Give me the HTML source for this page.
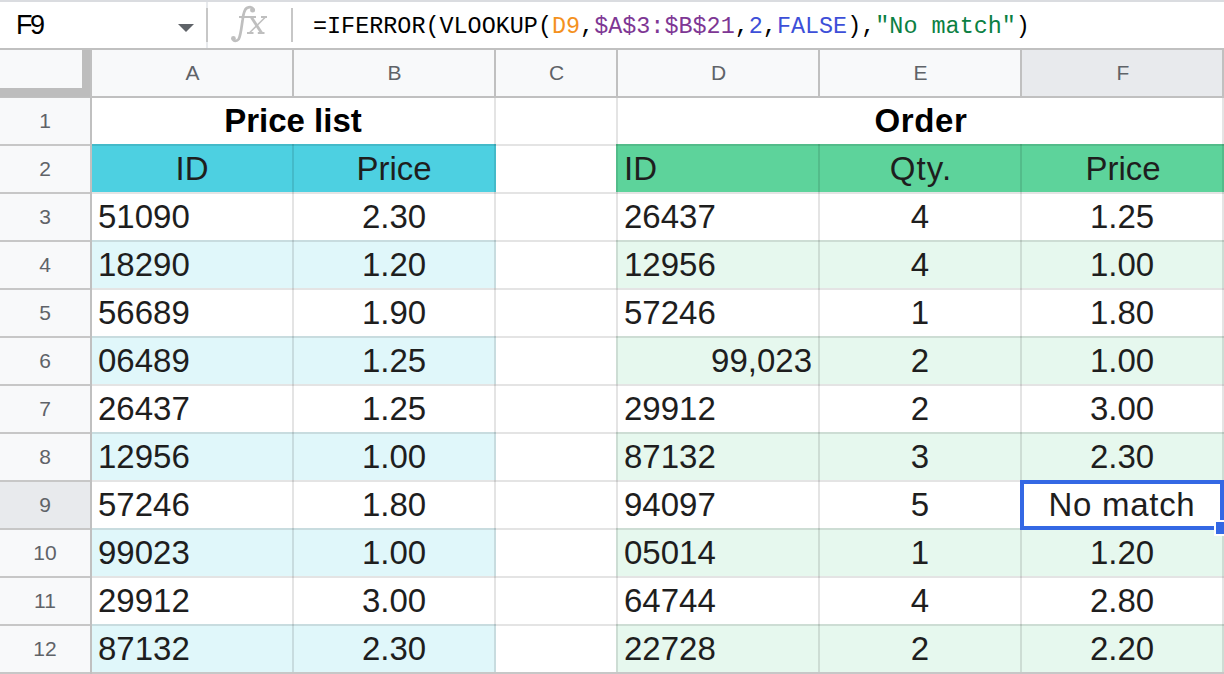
<!DOCTYPE html><html><head><meta charset="utf-8"><style>
*{margin:0;padding:0}
html,body{width:1224px;height:674px;overflow:hidden;background:#fff}
body{position:relative;font-family:"Liberation Sans",sans-serif}
body>div{position:absolute}
.rh,.ch{color:#5f6368;font-size:21px;text-align:center}
.c{height:46px;line-height:46px;font-size:33px;color:#1e1e1e;white-space:nowrap;overflow:hidden}
.b{font-weight:bold;color:#000}
.nb{left:16px;top:0;height:48px;line-height:50px;font-size:27px;letter-spacing:-2.4px;color:#000}
.fx{left:229px;top:0;height:48px;line-height:46px;font-family:"Liberation Serif",serif;font-style:italic;font-size:38px;color:#bdbdbd}
.fm{left:313px;top:2px;height:48px;line-height:49px;font-family:"Liberation Mono",monospace;font-size:23.43px;transform:scaleY(1.06);transform-origin:0 24px;color:#000;white-space:pre}
</style></head><body><div style="left:91px;top:144px;width:405px;height:48px;background:#4dd0e1;"></div>
<div style="left:616px;top:144px;width:608px;height:48px;background:#5dd39b;"></div>
<div style="left:91px;top:240px;width:405px;height:48px;background:#e0f7fa;"></div>
<div style="left:616px;top:240px;width:608px;height:48px;background:#e6f8ee;"></div>
<div style="left:91px;top:336px;width:405px;height:48px;background:#e0f7fa;"></div>
<div style="left:616px;top:336px;width:608px;height:48px;background:#e6f8ee;"></div>
<div style="left:91px;top:432px;width:405px;height:48px;background:#e0f7fa;"></div>
<div style="left:616px;top:432px;width:608px;height:48px;background:#e6f8ee;"></div>
<div style="left:91px;top:528px;width:405px;height:48px;background:#e0f7fa;"></div>
<div style="left:616px;top:528px;width:608px;height:48px;background:#e6f8ee;"></div>
<div style="left:91px;top:624px;width:405px;height:48px;background:#e0f7fa;"></div>
<div style="left:616px;top:624px;width:608px;height:48px;background:#e6f8ee;"></div>
<div style="left:91px;top:144px;width:1133px;height:2px;background:rgba(0,0,0,0.105);"></div>
<div style="left:91px;top:192px;width:1133px;height:2px;background:rgba(0,0,0,0.105);"></div>
<div style="left:91px;top:240px;width:1133px;height:2px;background:rgba(0,0,0,0.105);"></div>
<div style="left:91px;top:288px;width:1133px;height:2px;background:rgba(0,0,0,0.105);"></div>
<div style="left:91px;top:336px;width:1133px;height:2px;background:rgba(0,0,0,0.105);"></div>
<div style="left:91px;top:384px;width:1133px;height:2px;background:rgba(0,0,0,0.105);"></div>
<div style="left:91px;top:432px;width:1133px;height:2px;background:rgba(0,0,0,0.105);"></div>
<div style="left:91px;top:480px;width:1133px;height:2px;background:rgba(0,0,0,0.105);"></div>
<div style="left:91px;top:528px;width:1133px;height:2px;background:rgba(0,0,0,0.105);"></div>
<div style="left:91px;top:576px;width:1133px;height:2px;background:rgba(0,0,0,0.105);"></div>
<div style="left:91px;top:624px;width:1133px;height:2px;background:rgba(0,0,0,0.105);"></div>
<div style="left:292px;top:97px;width:2px;height:577px;background:rgba(0,0,0,0.105);"></div>
<div style="left:494px;top:97px;width:2px;height:577px;background:rgba(0,0,0,0.105);"></div>
<div style="left:616px;top:97px;width:2px;height:577px;background:rgba(0,0,0,0.105);"></div>
<div style="left:818px;top:97px;width:2px;height:577px;background:rgba(0,0,0,0.105);"></div>
<div style="left:1020px;top:97px;width:2px;height:577px;background:rgba(0,0,0,0.105);"></div>
<div style="left:1222px;top:97px;width:2px;height:577px;background:rgba(0,0,0,0.105);"></div>
<div style="left:292px;top:97px;width:2px;height:47px;background:#ffffff;"></div>
<div style="left:818px;top:97px;width:2px;height:47px;background:#ffffff;"></div>
<div style="left:1020px;top:97px;width:2px;height:47px;background:#ffffff;"></div>
<div style="left:0px;top:97px;width:90px;height:577px;background:#f8f9fa;"></div>
<div style="left:0px;top:482px;width:90px;height:46px;background:#e8eaed;"></div>
<div style="left:0px;top:144px;width:90px;height:2px;background:#c7c7c7;"></div>
<div style="left:0px;top:192px;width:90px;height:2px;background:#c7c7c7;"></div>
<div style="left:0px;top:240px;width:90px;height:2px;background:#c7c7c7;"></div>
<div style="left:0px;top:288px;width:90px;height:2px;background:#c7c7c7;"></div>
<div style="left:0px;top:336px;width:90px;height:2px;background:#c7c7c7;"></div>
<div style="left:0px;top:384px;width:90px;height:2px;background:#c7c7c7;"></div>
<div style="left:0px;top:432px;width:90px;height:2px;background:#c7c7c7;"></div>
<div style="left:0px;top:480px;width:90px;height:2px;background:#c7c7c7;"></div>
<div style="left:0px;top:528px;width:90px;height:2px;background:#c7c7c7;"></div>
<div style="left:0px;top:576px;width:90px;height:2px;background:#c7c7c7;"></div>
<div style="left:0px;top:624px;width:90px;height:2px;background:#c7c7c7;"></div>
<div style="left:0px;top:672px;width:1224px;height:2px;background:#c7c7c7;"></div>
<div style="left:90px;top:49px;width:2px;height:625px;background:#c0c0c0;"></div>
<div class="rh" style="left:0;top:98px;width:90px;height:46px;line-height:46px;">1</div>
<div class="rh" style="left:0;top:146px;width:90px;height:46px;line-height:46px;">2</div>
<div class="rh" style="left:0;top:194px;width:90px;height:46px;line-height:46px;">3</div>
<div class="rh" style="left:0;top:242px;width:90px;height:46px;line-height:46px;">4</div>
<div class="rh" style="left:0;top:290px;width:90px;height:46px;line-height:46px;">5</div>
<div class="rh" style="left:0;top:338px;width:90px;height:46px;line-height:46px;">6</div>
<div class="rh" style="left:0;top:386px;width:90px;height:46px;line-height:46px;">7</div>
<div class="rh" style="left:0;top:434px;width:90px;height:46px;line-height:46px;">8</div>
<div class="rh" style="left:0;top:482px;width:90px;height:46px;line-height:46px;">9</div>
<div class="rh" style="left:0;top:530px;width:90px;height:46px;line-height:46px;">10</div>
<div class="rh" style="left:0;top:578px;width:90px;height:46px;line-height:46px;">11</div>
<div class="rh" style="left:0;top:626px;width:90px;height:46px;line-height:46px;">12</div>
<div style="left:0px;top:49px;width:1224px;height:47px;background:#f8f9fa;"></div>
<div style="left:1022px;top:49px;width:202px;height:47px;background:#e8eaed;"></div>
<div style="left:292px;top:49px;width:2px;height:48px;background:#c0c0c0;"></div>
<div style="left:494px;top:49px;width:2px;height:48px;background:#c0c0c0;"></div>
<div style="left:616px;top:49px;width:2px;height:48px;background:#c0c0c0;"></div>
<div style="left:818px;top:49px;width:2px;height:48px;background:#c0c0c0;"></div>
<div style="left:1020px;top:49px;width:2px;height:48px;background:#c0c0c0;"></div>
<div style="left:1222px;top:49px;width:2px;height:48px;background:#c0c0c0;"></div>
<div style="left:0px;top:96px;width:1224px;height:2px;background:#c0c0c0;"></div>
<div class="ch" style="left:92px;top:49px;width:201px;height:47px;line-height:47px;">A</div>
<div class="ch" style="left:294px;top:49px;width:201px;height:47px;line-height:47px;">B</div>
<div class="ch" style="left:496px;top:49px;width:121px;height:47px;line-height:47px;">C</div>
<div class="ch" style="left:618px;top:49px;width:201px;height:47px;line-height:47px;">D</div>
<div class="ch" style="left:820px;top:49px;width:201px;height:47px;line-height:47px;">E</div>
<div class="ch" style="left:1022px;top:49px;width:202px;height:47px;line-height:47px;">F</div>
<div style="left:82px;top:49px;width:10px;height:48px;background:#bdbdbd;"></div>
<div style="left:0px;top:88px;width:92px;height:9px;background:#bdbdbd;"></div>
<div style="left:90px;top:49px;width:2px;height:48px;background:#c0c0c0;"></div>
<div style="left:0px;top:0px;width:1224px;height:48px;background:#ffffff;"></div>
<div style="left:0px;top:0px;width:1224px;height:2px;background:#dadce0;"></div>
<div style="left:0px;top:48px;width:1224px;height:2px;background:#c0c0c0;"></div>
<div class="nb">F9</div>
<svg style="position:absolute;left:178px;top:24px" width="16" height="8"><path d="M0 0 L16 0 L8 8 Z" fill="#5f6368"/></svg>
<div style="left:206px;top:2px;width:2px;height:46px;background:#e8eaed;"></div>
<div style="left:206px;top:8px;width:2px;height:34px;background:#c7c7c7;"></div>
<svg style="position:absolute;left:0;top:0" width="300" height="48" viewBox="0 0 300 48"><g fill="none" stroke="#bfbfbf"><path d="M233.2 39 C233.5 41.5 237 41.5 238.8 39 C240.8 35 241.8 25 242.6 20 C243.3 14 244.3 9.5 246.8 8 C249.3 6.8 252 7 253.1 9" stroke-width="2.7"/><path d="M251.5 17.5 L261.5 32.8" stroke-width="2.9"/><path d="M265 17.5 L249.5 32.8" stroke-width="1.5"/></g><g fill="#bfbfbf"><circle cx="233.4" cy="38.4" r="2.4"/><circle cx="252.6" cy="9.9" r="2.5"/><rect x="239" y="16" width="17" height="2"/><rect x="261" y="16" width="6" height="2"/><rect x="247" y="32" width="6.5" height="2"/><rect x="257.8" y="32" width="6.7" height="2"/></g></svg>
<div style="left:291px;top:8px;width:2px;height:34px;background:#c7c7c7;"></div>
<div class="fm"><span>=IFERROR(VLOOKUP(</span><span style="color:#f4911e">D9</span><span>,</span><span style="color:#7e3794">$A$3:$B$21</span><span>,</span><span style="color:#3d4fd8">2</span><span>,</span><span style="color:#3d4fd8">FALSE</span><span>),</span><span style="color:#0b8043">"No match"</span><span>)</span></div>
<div class="c b" style="left:92px;top:98px;width:402px;text-align:center;box-sizing:border-box;">Price list</div>
<div class="c b" style="left:618px;top:98px;width:606px;text-align:center;box-sizing:border-box;"><span style="letter-spacing:0.6px">Order</span></div>
<div class="c" style="left:92px;top:146px;width:200px;text-align:center;box-sizing:border-box;">ID</div>
<div class="c" style="left:294px;top:146px;width:200px;text-align:center;box-sizing:border-box;">Price</div>
<div class="c" style="left:618px;top:146px;width:200px;text-align:left;padding:0 6px;box-sizing:border-box;">ID</div>
<div class="c" style="left:822px;top:146px;width:198px;text-align:center;box-sizing:border-box;"><span style="letter-spacing:1.1px">Qty.</span></div>
<div class="c" style="left:1022px;top:146px;width:202px;text-align:center;box-sizing:border-box;">Price</div>
<div class="c" style="left:92px;top:194px;width:200px;text-align:left;padding:0 6px;box-sizing:border-box;">51090</div>
<div class="c" style="left:294px;top:194px;width:200px;text-align:center;box-sizing:border-box;">2.30</div>
<div class="c" style="left:618px;top:194px;width:200px;text-align:left;padding:0 6px;box-sizing:border-box;">26437</div>
<div class="c" style="left:820px;top:194px;width:200px;text-align:center;box-sizing:border-box;">4</div>
<div class="c" style="left:1022px;top:194px;width:200px;text-align:center;box-sizing:border-box;">1.25</div>
<div class="c" style="left:92px;top:242px;width:200px;text-align:left;padding:0 6px;box-sizing:border-box;">18290</div>
<div class="c" style="left:294px;top:242px;width:200px;text-align:center;box-sizing:border-box;">1.20</div>
<div class="c" style="left:618px;top:242px;width:200px;text-align:left;padding:0 6px;box-sizing:border-box;">12956</div>
<div class="c" style="left:820px;top:242px;width:200px;text-align:center;box-sizing:border-box;">4</div>
<div class="c" style="left:1022px;top:242px;width:200px;text-align:center;box-sizing:border-box;">1.00</div>
<div class="c" style="left:92px;top:290px;width:200px;text-align:left;padding:0 6px;box-sizing:border-box;">56689</div>
<div class="c" style="left:294px;top:290px;width:200px;text-align:center;box-sizing:border-box;">1.90</div>
<div class="c" style="left:618px;top:290px;width:200px;text-align:left;padding:0 6px;box-sizing:border-box;">57246</div>
<div class="c" style="left:820px;top:290px;width:200px;text-align:center;box-sizing:border-box;">1</div>
<div class="c" style="left:1022px;top:290px;width:200px;text-align:center;box-sizing:border-box;">1.80</div>
<div class="c" style="left:92px;top:338px;width:200px;text-align:left;padding:0 6px;box-sizing:border-box;">06489</div>
<div class="c" style="left:294px;top:338px;width:200px;text-align:center;box-sizing:border-box;">1.25</div>
<div class="c" style="left:618px;top:338px;width:200px;text-align:right;padding:0 6px;box-sizing:border-box;">99,023</div>
<div class="c" style="left:820px;top:338px;width:200px;text-align:center;box-sizing:border-box;">2</div>
<div class="c" style="left:1022px;top:338px;width:200px;text-align:center;box-sizing:border-box;">1.00</div>
<div class="c" style="left:92px;top:386px;width:200px;text-align:left;padding:0 6px;box-sizing:border-box;">26437</div>
<div class="c" style="left:294px;top:386px;width:200px;text-align:center;box-sizing:border-box;">1.25</div>
<div class="c" style="left:618px;top:386px;width:200px;text-align:left;padding:0 6px;box-sizing:border-box;">29912</div>
<div class="c" style="left:820px;top:386px;width:200px;text-align:center;box-sizing:border-box;">2</div>
<div class="c" style="left:1022px;top:386px;width:200px;text-align:center;box-sizing:border-box;">3.00</div>
<div class="c" style="left:92px;top:434px;width:200px;text-align:left;padding:0 6px;box-sizing:border-box;">12956</div>
<div class="c" style="left:294px;top:434px;width:200px;text-align:center;box-sizing:border-box;">1.00</div>
<div class="c" style="left:618px;top:434px;width:200px;text-align:left;padding:0 6px;box-sizing:border-box;">87132</div>
<div class="c" style="left:820px;top:434px;width:200px;text-align:center;box-sizing:border-box;">3</div>
<div class="c" style="left:1022px;top:434px;width:200px;text-align:center;box-sizing:border-box;">2.30</div>
<div class="c" style="left:92px;top:482px;width:200px;text-align:left;padding:0 6px;box-sizing:border-box;">57246</div>
<div class="c" style="left:294px;top:482px;width:200px;text-align:center;box-sizing:border-box;">1.80</div>
<div class="c" style="left:618px;top:482px;width:200px;text-align:left;padding:0 6px;box-sizing:border-box;">94097</div>
<div class="c" style="left:820px;top:482px;width:200px;text-align:center;box-sizing:border-box;">5</div>
<div class="c" style="left:1022px;top:482px;width:200px;text-align:center;box-sizing:border-box;"><span style="letter-spacing:0.7px">No match</span></div>
<div class="c" style="left:92px;top:530px;width:200px;text-align:left;padding:0 6px;box-sizing:border-box;">99023</div>
<div class="c" style="left:294px;top:530px;width:200px;text-align:center;box-sizing:border-box;">1.00</div>
<div class="c" style="left:618px;top:530px;width:200px;text-align:left;padding:0 6px;box-sizing:border-box;">05014</div>
<div class="c" style="left:820px;top:530px;width:200px;text-align:center;box-sizing:border-box;">1</div>
<div class="c" style="left:1022px;top:530px;width:200px;text-align:center;box-sizing:border-box;">1.20</div>
<div class="c" style="left:92px;top:578px;width:200px;text-align:left;padding:0 6px;box-sizing:border-box;">29912</div>
<div class="c" style="left:294px;top:578px;width:200px;text-align:center;box-sizing:border-box;">3.00</div>
<div class="c" style="left:618px;top:578px;width:200px;text-align:left;padding:0 6px;box-sizing:border-box;">64744</div>
<div class="c" style="left:820px;top:578px;width:200px;text-align:center;box-sizing:border-box;">4</div>
<div class="c" style="left:1022px;top:578px;width:200px;text-align:center;box-sizing:border-box;">2.80</div>
<div class="c" style="left:92px;top:626px;width:200px;text-align:left;padding:0 6px;box-sizing:border-box;">87132</div>
<div class="c" style="left:294px;top:626px;width:200px;text-align:center;box-sizing:border-box;">2.30</div>
<div class="c" style="left:618px;top:626px;width:200px;text-align:left;padding:0 6px;box-sizing:border-box;">22728</div>
<div class="c" style="left:820px;top:626px;width:200px;text-align:center;box-sizing:border-box;">2</div>
<div class="c" style="left:1022px;top:626px;width:200px;text-align:center;box-sizing:border-box;">2.20</div>
<div style="left:1020px;top:480px;width:204px;height:4px;background:#3468e4;"></div>
<div style="left:1020px;top:480px;width:4px;height:50px;background:#3468e4;"></div>
<div style="left:1020px;top:526px;width:194px;height:4px;background:#3468e4;"></div>
<div style="left:1220px;top:480px;width:4px;height:40px;background:#3468e4;"></div>
<div style="left:1214px;top:520px;width:10px;height:16px;background:#ffffff;"></div>
<div style="left:1216px;top:522px;width:8px;height:12px;background:#3468e4;"></div></body></html>
